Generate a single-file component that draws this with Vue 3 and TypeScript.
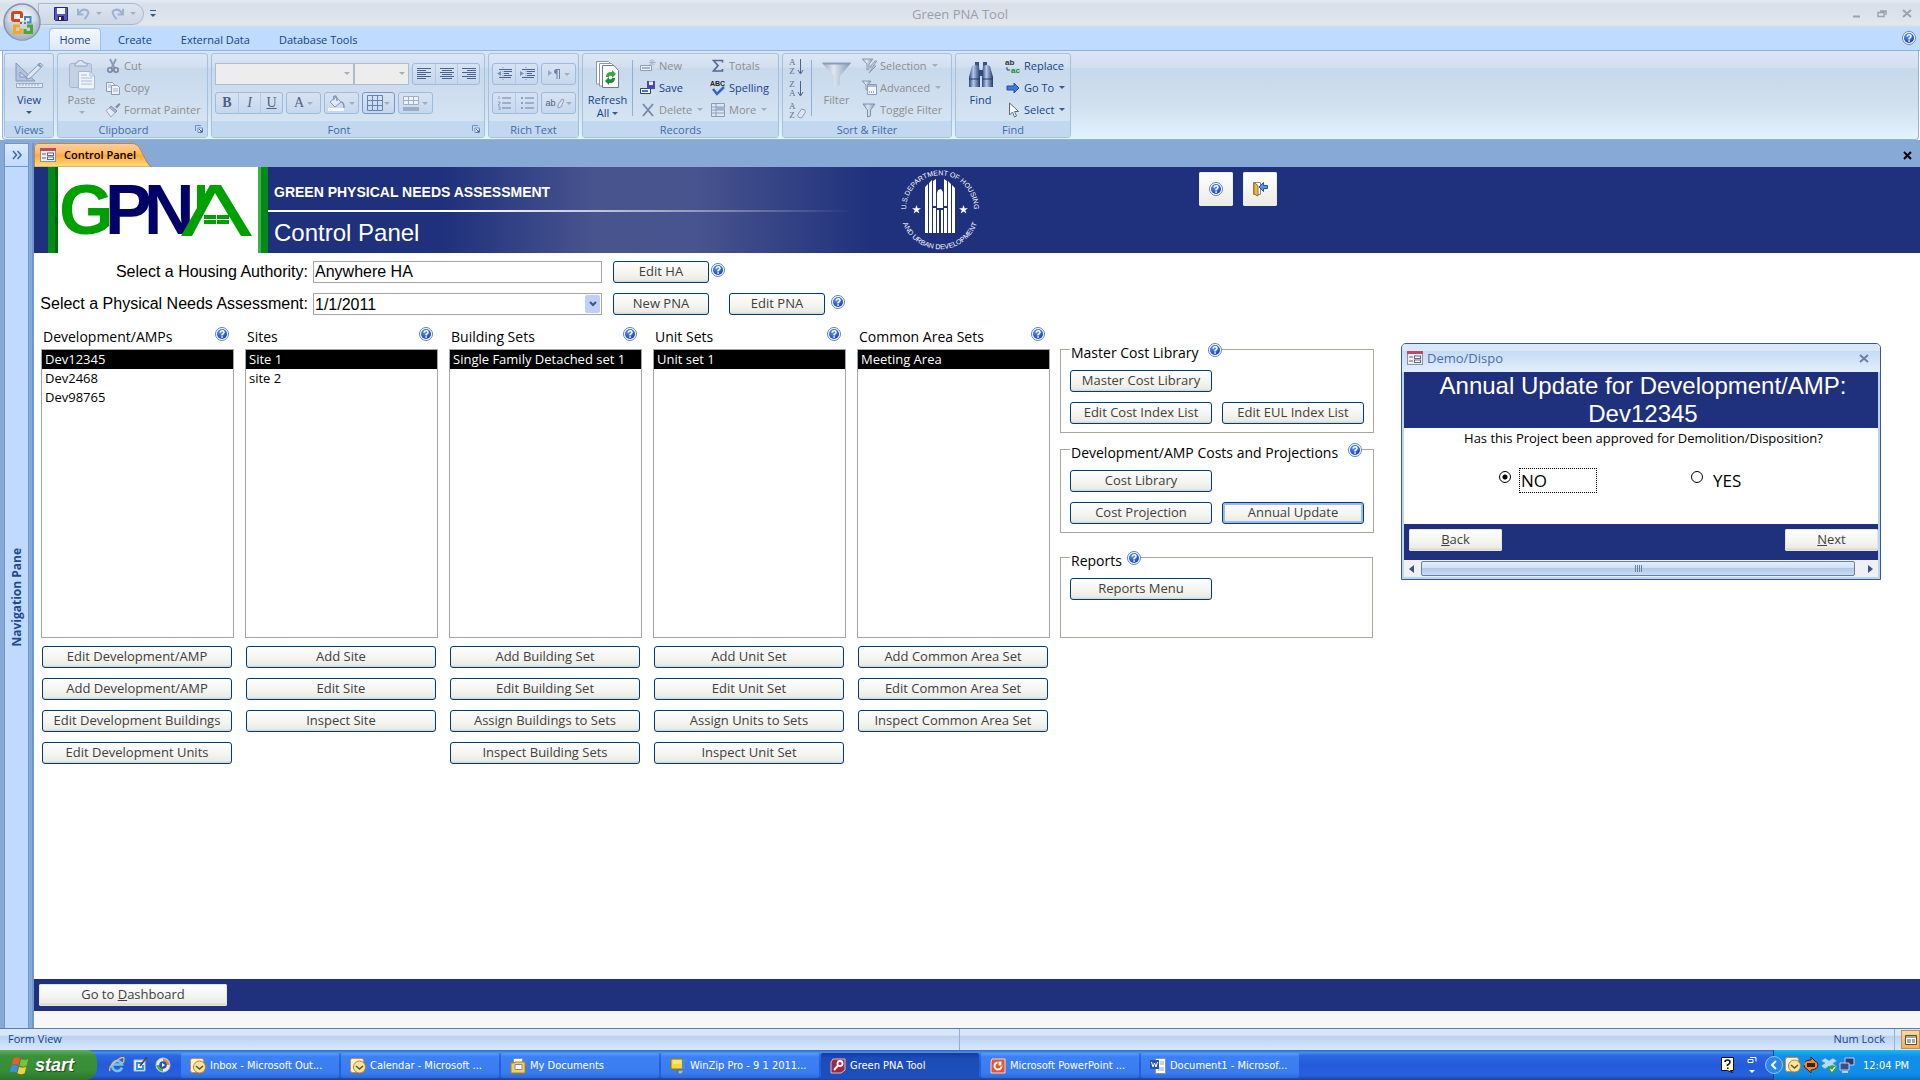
<script setup lang="ts">
import { ref } from 'vue'

interface SmallCommand { icon: string; text: string; off?: boolean; arrow?: boolean }
interface ListColumn { title: string; items: string[]; actions: string[] }
interface CommandButton { text: string; focused?: boolean }
interface CommandGroup { title: string; rows: CommandButton[][] }
interface Task { icon: string; text: string; active?: boolean }

const ribbonTabs = ['Home', 'Create', 'External Data', 'Database Tools']

const clipboard: SmallCommand[] = [
  { icon: 'cut', text: 'Cut', off: true },
  { icon: 'copy', text: 'Copy', off: true },
  { icon: 'brush', text: 'Format Painter', off: true },
]
const records: SmallCommand[] = [
  { icon: 'new', text: 'New', off: true },
  { icon: 'totals', text: 'Totals', off: true },
  { icon: 'saverec', text: 'Save' },
  { icon: 'spell', text: 'Spelling' },
  { icon: 'delete', text: 'Delete', off: true, arrow: true },
  { icon: 'more', text: 'More', off: true, arrow: true },
]
const filters: SmallCommand[] = [
  { icon: 'selection', text: 'Selection', off: true, arrow: true },
  { icon: 'advanced', text: 'Advanced', off: true, arrow: true },
  { icon: 'toggle', text: 'Toggle Filter', off: true },
]
const finds: SmallCommand[] = [
  { icon: 'replace', text: 'Replace' },
  { icon: 'goto', text: 'Go To', arrow: true },
  { icon: 'select', text: 'Select', arrow: true },
]
const sorts = [
  { name: 'Ascending', top: 'A', low: 'Z', eraser: false },
  { name: 'Descending', top: 'Z', low: 'A', eraser: false },
  { name: 'Clear all sorts', top: 'A', low: 'Z', eraser: true },
]

const columns: ListColumn[] = [
  {
    title: 'Development/AMPs',
    items: ['Dev12345', 'Dev2468', 'Dev98765'],
    actions: ['Edit Development/AMP', 'Add Development/AMP', 'Edit Development Buildings', 'Edit Development Units'],
  },
  { title: 'Sites', items: ['Site 1', 'site 2'], actions: ['Add Site', 'Edit Site', 'Inspect Site'] },
  {
    title: 'Building Sets',
    items: ['Single Family Detached set 1'],
    actions: ['Add Building Set', 'Edit Building Set', 'Assign Buildings to Sets', 'Inspect Building Sets'],
  },
  {
    title: 'Unit Sets',
    items: ['Unit set 1'],
    actions: ['Add Unit Set', 'Edit Unit Set', 'Assign Units to Sets', 'Inspect Unit Set'],
  },
  {
    title: 'Common Area Sets',
    items: ['Meeting Area'],
    actions: ['Add Common Area Set', 'Edit Common Area Set', 'Inspect Common Area Set'],
  },
]

const groups: CommandGroup[] = [
  {
    title: 'Master Cost Library',
    rows: [[{ text: 'Master Cost Library' }], [{ text: 'Edit Cost Index List' }, { text: 'Edit EUL Index List' }]],
  },
  {
    title: 'Development/AMP Costs and Projections',
    rows: [[{ text: 'Cost Library' }], [{ text: 'Cost Projection' }, { text: 'Annual Update', focused: true }]],
  },
  { title: 'Reports', rows: [[{ text: 'Reports Menu' }]] },
]

const tasks: Task[] = [
  { icon: 'outlook', text: 'Inbox - Microsoft Out...' },
  { icon: 'outlook', text: 'Calendar - Microsoft ...' },
  { icon: 'docs', text: 'My Documents' },
  { icon: 'zip', text: 'WinZip Pro - 9 1 2011...' },
  { icon: 'access', text: 'Green PNA Tool', active: true },
  { icon: 'ppt', text: 'Microsoft PowerPoint ...' },
  { icon: 'word', text: 'Document1 - Microsof...' },
]

const authority = ref('Anywhere HA')
const assessment = ref('1/1/2011')
const picked = ref(columns.map((c) => c.items[0]))
const approved = ref('NO')
</script>

<template>
  <div class="page">
    <svg class="sprite" aria-hidden="true">
      <defs>
        <radialGradient id="gHelp" cx=".4" cy=".3" r=".8"><stop offset="0" stop-color="#5b9bf5" /><stop offset="1" stop-color="#0c35b8" /></radialGradient>
        <linearGradient id="gMetal" x1="0" y1="0" x2="1" y2="0"><stop offset="0" stop-color="#2c477c" /><stop offset=".4" stop-color="#b5c8e8" /><stop offset="1" stop-color="#22396c" /></linearGradient>
        <linearGradient id="gFunnel" x1="0" y1="0" x2="1" y2="0"><stop offset="0" stop-color="#98a9c4" /><stop offset=".4" stop-color="#dfe6f1" /><stop offset="1" stop-color="#8597b4" /></linearGradient>
        <radialGradient id="gOrb" cx=".5" cy=".4" r=".6"><stop offset="0" stop-color="#ffffff" /><stop offset=".6" stop-color="#d5dce8" /><stop offset="1" stop-color="#8e9db5" /></radialGradient>
        <linearGradient id="gTab" x1="0" y1="0" x2="0" y2="1"><stop offset="0" stop-color="#fdd09b" /><stop offset=".4" stop-color="#fdba69" /><stop offset=".5" stop-color="#ffa83c" /><stop offset="1" stop-color="#ffdf80" /></linearGradient>
      </defs>
      <symbol id="help" viewBox="0 0 14 14">
        <circle cx="7" cy="7" r="6.5" fill="#fff" stroke="#5f82bd" /><circle cx="7" cy="7" r="5" fill="url(#gHelp)" />
        <path d="M5 5.6Q5.2 3.7 7.1 3.7T9 5.4Q9 6.4 7.1 7.4V8.4" fill="none" stroke="#fff" stroke-width="1.5" /><rect x="6.3" y="9.3" width="1.6" height="1.5" fill="#fff" />
      </symbol>
      <symbol id="form" viewBox="0 0 16 14">
        <rect x=".5" y=".5" width="15" height="13" fill="#f4ecea" stroke="#8393ad" /><rect x="0" y="0" width="16" height="3" fill="#b54c68" />
        <path d="M2 6h4M2 10h4" stroke="#5a6b85" /><rect x="7.5" y="5" width="6" height="2.5" fill="#fff" stroke="#5a6b85" /><rect x="7.5" y="9" width="6" height="2.5" fill="#fff" stroke="#5a6b85" />
      </symbol>
      <symbol id="floppy" viewBox="0 0 14 14"><path d="M.5.5h13v13h-12l-1-1z" fill="#5a56c8" stroke="#2b2578" /><path d="M3 1h8v6H3z" fill="#f3f6fc" /><path d="M4 9h6v5H4z" fill="#24204f" /><path d="M5 10h2v3H5z" fill="#fff" /></symbol>
      <symbol id="undo" viewBox="0 0 14 14"><path d="M1 2v6h6M2 7Q5 2 9 3t3 4-4 6" fill="none" stroke="#9db1d3" stroke-width="2.2" /></symbol>
      <symbol id="redo" viewBox="0 0 14 14"><path d="M13 2v6H7M12 7Q9 2 5 3T2 7t4 6" fill="none" stroke="#9db1d3" stroke-width="2.2" /></symbol>
      <symbol id="office" viewBox="0 0 40 40">
        <circle cx="20" cy="20" r="18" fill="url(#gOrb)" stroke="#8593ad" stroke-width="1.5" />
        <path d="M3 21a17 17 0 0 0 34 0Q20 17 3 21z" fill="#b4c0d2" opacity=".5" />
        <path d="M18 18.500h-6q-1.500 0-1.500-1.500v-5q0-1.500 1.500-1.500h6q1.500 0 1.500 1.500v4" fill="none" stroke="#dc4413" stroke-width="3" />
        <path d="M23 18.500v-3.500h5.500v5.500H25" fill="none" stroke="#3c86d6" stroke-width="2" />
        <path d="M18 24h-5.500v6.500h6.500v-4" fill="none" stroke="#f5a91b" stroke-width="3" />
        <path d="M23 27v3.500h6.500V24H25" fill="none" stroke="#4ea62c" stroke-width="3" />
        <path d="M18 20h2v2h-2z" fill="#dc4413" /><path d="M22 20h2v2h-2z" fill="#3c86d6" />
      </symbol>
      <symbol id="view" viewBox="0 0 30 30">
        <path d="M2 3v18h19zM6 12v5h6z" fill="#b4c4de" fill-rule="evenodd" stroke="#8498ba" /><path d="M12 19l1.500-4L26 3l3 2.500L16.500 18z" fill="#dde5f1" stroke="#8498ba" />
        <path d="M24 4l3 3" stroke="#8498ba" stroke-width="2" /><path d="M2.500 23.500h26v4h-26z" fill="#e4eaf4" stroke="#97a8c5" /><path d="M6 24v2M9 24v2M12 24v2M15 24v2M18 24v2M21 24v2M24 24v2" stroke="#97a8c5" />
      </symbol>
      <symbol id="paste" viewBox="0 0 28 30">
        <rect x="1.500" y="3.500" width="22" height="24" rx="2" fill="#c5d2e6" stroke="#a6b6d2" /><path d="M7 6h12V3h-3q0-2.500-3.500-2.500T9 3H7z" fill="#dde5f0" stroke="#91a3c2" />
        <path d="M10.500 11.500H22l4.500 4.500v13h-16z" fill="#f0f4fa" stroke="#a6b6d2" /><path d="M22 11.500V16h4.500M13 15h6M13 18h11M13 21h11M13 24h11" fill="none" stroke="#a9bad7" />
      </symbol>
      <symbol id="cut" viewBox="0 0 16 16"><path d="M5 1l4.500 9M11 1L6.500 10" stroke="#8b9ab5" stroke-width="1.800" /><circle cx="5" cy="12" r="2.200" fill="none" stroke="#75859f" stroke-width="1.600" /><circle cx="11" cy="12" r="2.200" fill="none" stroke="#75859f" stroke-width="1.600" /></symbol>
      <symbol id="copy" viewBox="0 0 16 16"><path d="M1.500 2.500h6l2 2v7h-8z" fill="#eef2f8" stroke="#8b9ab5" /><path d="M6.500 5.500h6l2 2v7h-8z" fill="#eef2f8" stroke="#8b9ab5" /><path d="M3 5h3M3 7h3M8 9h5M8 11h5" stroke="#a3b2cb" /></symbol>
      <symbol id="brush" viewBox="0 0 16 16"><path d="M10 5l4-4 1.500 1.500-3.500 4z" fill="#7d8ea9" /><path d="M6 4l6 5-2 2-6-5z" fill="#a5b3c9" stroke="#8392ac" /><path d="M4.500 6L1 8.500 6 15l4-4.500z" fill="#e8edf5" stroke="#99a8c1" /></symbol>
      <symbol id="launch" viewBox="0 0 8 8"><path d="M.5 6V.5H6" fill="none" stroke="#6c8fc0" /><path d="M3 3h4.500v4.500H3z" fill="#fff" stroke="#6c8fc0" /><path d="M4 4l3 3M7 4.500V7H4.500" stroke="#3f5f95" fill="none" /></symbol>
      <symbol id="alignl" viewBox="0 0 14 12"><path d="M0 .5h14M0 2.500h9M0 4.500h14M0 6.500h9M0 8.500h14M0 10.500h9" stroke="#4b628c" /></symbol>
      <symbol id="alignc" viewBox="0 0 14 12"><path d="M0 .5h14M2 2.500h10M0 4.500h14M2 6.500h10M0 8.500h14M2 10.500h10" stroke="#4b628c" /></symbol>
      <symbol id="alignr" viewBox="0 0 14 12"><path d="M0 .5h14M5 2.500h9M0 4.500h14M5 6.500h9M0 8.500h14M5 10.500h9" stroke="#4b628c" /></symbol>
      <symbol id="outdent" viewBox="0 0 16 16"><path d="M7 1v14" stroke="#7f92b3" stroke-dasharray="1 1" /><path d="M3 3.500h13M8 5.500h8M8 7.500h5M8 9.500h8M3 11.500h12" stroke="#4b628c" /><path d="M5 5L1 7.500 5 10z" fill="#7f92b3" /></symbol>
      <symbol id="indent" viewBox="0 0 16 16"><path d="M7 1v14" stroke="#7f92b3" stroke-dasharray="1 1" /><path d="M3 3.500h13M8 5.500h8M8 7.500h5M8 9.500h8M3 11.500h12" stroke="#4b628c" /><path d="M1 5l4 2.500L1 10z" fill="#7f92b3" /></symbol>
      <symbol id="para" viewBox="0 0 14 12"><path d="M1 2l4 3-4 3z" fill="#98a8c4" /><path d="M10 11V1M12.500 11V1M13 1.500H9.500" fill="none" stroke="#6d80a3" /><path d="M10 1q-3 0-3 2.500T10 6z" fill="#6d80a3" /></symbol>
      <symbol id="numlist" viewBox="0 0 14 14"><path d="M2 0v3M1 6h2v1L1 9h2M1 11h2v3H1" fill="none" stroke="#8e9fbd" /><path d="M5 2h9M5 7h9M5 12h9" stroke="#6d80a3" /></symbol>
      <symbol id="bullist" viewBox="0 0 14 14"><path d="M1 1h2v2H1zM1 6h2v2H1zM1 11h2v2H1z" fill="#8e9fbd" /><path d="M5 2h9M5 7h9M5 12h9" stroke="#6d80a3" /></symbol>
      <symbol id="marker" viewBox="0 0 8 12"><path d="M1 8l4-6 2 1-3 7-3 1z" fill="#dbe2ee" stroke="#8e9fbd" /></symbol>
      <symbol id="bucket" viewBox="0 0 18 16"><path d="M2 7l6-5 5 5-6 5z" fill="#e4eaf3" stroke="#8797b3" /><path d="M6 5q-1-4 1-4t2 5M13 7q3 0 3 6" fill="none" stroke="#8797b3" stroke-width="1.500" /><path d="M0 13h16v3H0z" fill="#f4f6fa" /></symbol>
      <symbol id="grid" viewBox="0 0 16 16"><path d="M.5.5h15v15H.5zM5.500 0v16M10.500 0v16M0 5.500h16M0 10.500h16" fill="none" stroke="#6482b2" /></symbol>
      <symbol id="altrow" viewBox="0 0 16 16"><path d="M.5 1.500h15v8H.5zM5.500 1v8M10.500 1v8M0 5.500h16" fill="#eef2f8" stroke="#a0afc8" /><path d="M0 12h16v4H0z" fill="#9cabc7" /></symbol>
      <symbol id="refresh" viewBox="0 0 26 30">
        <path d="M1.500 1.500h12l3 3V24h-15z" fill="#fff" stroke="#8b95a5" /><path d="M4.500 3.500h12l3 3V26h-15z" fill="#fff" stroke="#8b95a5" /><path d="M7.500 5.500H19l4.500 5v17h-16z" fill="#fff" stroke="#6f7a8c" />
        <path d="M11 17q0-5 5-5h1v-2l4 4-4 4v-2q-3-1-3 1z" fill="#35a548" /><path d="M20 18q0 5-5 5h-1v2l-4-4 4-4v2q3 1 3-1z" fill="#1d8c36" />
      </symbol>
      <symbol id="new" viewBox="0 0 16 16"><path d="M.5 7.500h11v5H.5z" fill="#eef2f8" stroke="#8b9ab5" /><path d="M2 10h8" stroke="#8b9ab5" stroke-width="1.500" /><path d="M12 1v7M9 4.500h7M9.500 2l5 5M14.500 2l-5 5" stroke="#a9b6cc" /></symbol>
      <symbol id="totals" viewBox="0 0 16 16"><path d="M12.500 4.500V2.500h-9l4.500 5-4.500 5.500h9V11" fill="none" stroke="#53688f" stroke-width="1.600" /></symbol>
      <symbol id="saverec" viewBox="0 0 16 16"><path d="M.5 8.500h10v5H.5z" fill="#fff" stroke="#29436f" /><path d="M2 11h6" stroke="#3e78d8" stroke-width="2" /><path d="M7 1h8v8H7z" fill="#4b47b5" /><path d="M9 1.500h4V5H9z" fill="#e9eefb" /></symbol>
      <symbol id="delete" viewBox="0 0 16 16"><path d="M3 2l10 12M13 2L3 14" stroke="#7586a4" stroke-width="1.800" /></symbol>
      <symbol id="more" viewBox="0 0 16 16"><path d="M1.500 1.500h13v13h-13zM1 5h14M1 8h14M1 11h14M6 1v14" fill="#dde5f1" stroke="#8b9dbd" /><path d="M6 5h9v3H6z" fill="#9cb0d2" /></symbol>
      <symbol id="down" viewBox="0 0 7 18"><path d="M3.500 1v14M1 12l2.500 4L6 12" fill="none" stroke="#4b628c" /></symbol>
      <symbol id="eraser" viewBox="0 0 9 18"><path d="M0.500 13l4-6q4 0 4 3l-4 6q-4 0-4-3z" fill="#dfe6f1" stroke="#8b9ab5" /></symbol>
      <symbol id="funnel" viewBox="0 0 32 28"><path d="M1 2h29L19 15v9l-6 3V15z" fill="url(#gFunnel)" /><path d="M1 1.500h29l-2 2H3z" fill="#8b9cba" /></symbol>
      <symbol id="selection" viewBox="0 0 16 16"><path d="M1 1h11L8 6v5l-2 1V6z" fill="url(#gFunnel)" stroke="#8b9ab5" /><path d="M14 3l-5 6h3l-4 6 7-7h-3l4-5z" fill="#c8d2e3" stroke="#8b9ab5" /></symbol>
      <symbol id="advanced" viewBox="0 0 16 16"><path d="M1 1h9L7 5v4L5 10V5z" fill="url(#gFunnel)" stroke="#8b9ab5" /><path d="M6.500 4.500h9v10h-9z" fill="#f2f5fa" stroke="#8b9ab5" /><path d="M8 12h1M10 12h1M12 12h1" stroke="#4b628c" /><path d="M7 6h8" stroke="#a9bad7" stroke-width="2" /></symbol>
      <symbol id="toggle" viewBox="0 0 16 16"><path d="M2 2h12L9.500 8v6l-3 1V8z" fill="url(#gFunnel)" stroke="#7f8fae" /></symbol>
      <symbol id="find" viewBox="0 0 28 28">
        <path d="M8 1h4v4H8zM16 1h4v4h-4z" fill="#36528b" /><path d="M5 5q3-2 7 0l1 11v10H2V16z" fill="url(#gMetal)" /><path d="M16 5q4-2 7 0l3 11v10H15V16z" fill="url(#gMetal)" /><path d="M12 9h4v6h-4z" fill="#2f4a80" /><path d="M2 18h11M15 18h11" stroke="#22396c" />
      </symbol>
      <symbol id="goto" viewBox="0 0 16 16"><path d="M2 6h7V3l5 5-5 5v-3H2z" fill="#3e7be0" stroke="#1f4ca8" /></symbol>
      <symbol id="select" viewBox="0 0 16 16"><path d="M4.500 1v12l3-3 2 5 2-1-2-4.500h4z" fill="#fff" stroke="#5a6a86" /></symbol>
      <symbol id="exit" viewBox="0 0 16 16"><path d="M1.500 1.500h7v12h-7z" fill="#fff" stroke="#8c8c8c" /><path d="M2 1.500l4 3V15l-4-2z" fill="#f2b83f" stroke="#96701c" /><path d="M15.500 4.500h-4v-3L7 6l4.500 4.500v-3h4z" fill="#5b93ea" stroke="#2453b4" /></symbol>
      <symbol id="outlook" viewBox="0 0 16 16"><rect x=".5" y=".5" width="13" height="14" rx="2" fill="#fff5df" stroke="#d98a1e" /><circle cx="9.500" cy="9" r="6" fill="#fbe4a2" stroke="#b98224" /><path d="M6 8l3.500 3L13 8" fill="none" stroke="#6f5118" stroke-width="1.500" /></symbol>
      <symbol id="docs" viewBox="0 0 16 16"><path d="M3.500.5h9v9h-9z" fill="#fff" stroke="#8a94a6" /><path d="M1 5h3l1-1h10v11H1z" fill="#f6cf57" stroke="#b0821a" /><path d="M5 6.500h7v5H5z" fill="#fff" stroke="#7b8aa0" /></symbol>
      <symbol id="zip" viewBox="0 0 16 16"><path d="M1 1h13v10H1z" fill="#f9d632" stroke="#95740b" /><path d="M3 3h8M3 5h8" stroke="#fff6b4" /><path d="M12 1h3v12h-3z" fill="#4b89d9" /><path d="M8 12h6l-2 4H8z" fill="#9fb8d6" stroke="#4b6c9c" /></symbol>
      <symbol id="access" viewBox="0 0 16 16"><path d="M3 1h12v11l-4 3H1V4z" fill="#a12843" stroke="#e3b8c1" /><circle cx="10" cy="5.500" r="2.500" fill="none" stroke="#fff" stroke-width="1.800" /><path d="M8 7.500L4 12" stroke="#fff" stroke-width="2" /></symbol>
      <symbol id="ppt" viewBox="0 0 16 16"><path d="M2 1h13v14H1V4z" fill="#e8532a" stroke="#fbd5c8" /><circle cx="8" cy="8" r="3.500" fill="none" stroke="#fff" stroke-width="2" /><path d="M8 8V3h4v5z" fill="#fff" stroke="#e8532a" /></symbol>
      <symbol id="word" viewBox="0 0 16 16"><path d="M5.500.5h10v15h-10z" fill="#fff" stroke="#7b92bd" /><path d="M10 4h4M10 6h4M8 12h6M8 10h6" stroke="#90a6cf" /><path d="M0 2h9v9H0z" fill="#2b559f" /><path d="M1.500 4l1.500 5 1.500-4L6 9l1.500-5" fill="none" stroke="#fff" /></symbol>
      <symbol id="ie" viewBox="0 0 16 16"><path d="M13 10.500A5 5 0 1 1 13 7.500H4" fill="none" stroke="#6fc3f8" stroke-width="2.600" /><path d="M1 14Q-1 10 7 4t8-2-2 4" fill="none" stroke="#f4c542" stroke-width="1.300" /></symbol>
      <symbol id="desk" viewBox="0 0 16 16"><path d="M2 3h11v11H2z" fill="#eef4ff" stroke="#9fc0ee" /><path d="M11 6H5v6h6V8" fill="none" stroke="#2d8bd8" stroke-width="1.800" /><path d="M15 0L8 9" stroke="#5b452c" stroke-width="1.800" /></symbol>
      <symbol id="wmp" viewBox="0 0 16 16"><circle cx="8" cy="8" r="7" fill="#e7edf8" stroke="#b9cdf0" /><path d="M8 1.500A6.500 6.500 0 0 1 14.500 8H11L8 5z" fill="#f08a24" /><path d="M8 14.500A6.500 6.500 0 0 1 1.500 8H5l3 3z" fill="#58ad3c" /><circle cx="8" cy="8" r="3.800" fill="#2455b5" /><path d="M7 6l3 2-3 2z" fill="#fff" /></symbol>
      <symbol id="flag" viewBox="0 0 20 18"><path d="M4 3q3-2 6 0L8.500 9q-3-2-6 0z" fill="#ee5a2c" /><path d="M11 3.500q3 2 6.500 0L16 9.500q-3 2-6.500 0z" fill="#7cc142" /><path d="M2.200 10q3-2 6 0L6.800 16q-3-2-6 0z" fill="#3f8cf0" /><path d="M9.200 10.500q3 2 6.500 0l-1.500 6q-3 2-6.500 0z" fill="#fbcf37" /></symbol>
      <symbol id="agent" viewBox="0 0 16 16"><path d="M2 5q1-2 6-2V0l4 4q3 1 3 4t-3 4-4 1v3l-4-4q-3-1-3-4" fill="#f08430" stroke="#3a2410" /><path d="M4 6h8v4H4z" fill="#3a2410" /></symbol>
      <symbol id="dropbox" viewBox="0 0 16 16"><path d="M4 1l4 2.500L12 1l4 3-4 2.500 4 3-4 2.500-4-3-4 3-4-3 4-3L0 4z" fill="#b4dcfa" stroke="#3e86cb" stroke-width=".6" /><circle cx="11.500" cy="12" r="3.800" fill="#36a23a" /><path d="M9.500 12l1.500 2 3-4" fill="none" stroke="#fff" stroke-width="1.200" /></symbol>
      <symbol id="net" viewBox="0 0 16 16"><path d="M6 1h9v7H6z" fill="#2b3b72" stroke="#c5cde6" /><path d="M1 6h9v7H1z" fill="#3c4c8d" stroke="#c5cde6" /><path d="M3 15h6" stroke="#c5cde6" stroke-width="2" /></symbol>
      <symbol id="ask" viewBox="0 0 14 16"><path d="M.5.5h12v13h-3l2 2-5-2h-6z" fill="#fffbe0" stroke="#111" /><path d="M4 5q0-2 2.500-2T9 5t-2.500 3v1" fill="none" stroke="#111" stroke-width="1.600" /><path d="M6 10.500h1.600V12H6z" fill="#111" /></symbol>
      <symbol id="star" viewBox="0 0 10 10"><path d="M5 0l1.200 3.600H10L7 5.900 8.100 9.500 5 7.300 1.900 9.500 3 5.900 0 3.600h3.800z" fill="#fff" /></symbol>
    </svg>

    <header class="titlebar">
      <div class="bar-left">
        <div class="qat">
          <button class="plain" type="button" aria-label="Save"><svg width="14" height="14"><use href="#floppy" /></svg></button>
          <button class="plain drop" type="button" aria-label="Undo"><svg width="13" height="13"><use href="#undo" /></svg><i class="tri off"></i></button>
          <button class="plain drop" type="button" aria-label="Redo"><svg width="13" height="13"><use href="#redo" /></svg><i class="tri off"></i></button>
        </div>
        <button class="plain custom" type="button" aria-label="Customize toolbar"><i class="tri"></i></button>
      </div>
      <h1 class="app-title">Green PNA Tool</h1>
      <div class="winbtns">
        <button class="plain" type="button" aria-label="Minimize"><svg width="10" height="10"><path d="M1 7.500h7" stroke="#9aa3ae" stroke-width="2" /></svg></button>
        <button class="plain" type="button" aria-label="Restore"><svg width="10" height="10"><path d="M3 2h6v4M1 3.500h6v4H1z" fill="none" stroke="#9aa3ae" stroke-width="1.500" /></svg></button>
        <button class="plain" type="button" aria-label="Close"><svg width="10" height="10"><path d="M1 1l8 7M9 1L1 8" stroke="#9aa3ae" stroke-width="2" /></svg></button>
      </div>
    </header>
    <button class="plain orb" type="button" aria-label="Office"><svg width="40" height="40"><use href="#office" /></svg></button>

    <nav class="tabs">
      <button v-for="(t, i) in ribbonTabs" :key="t" class="tab" :class="{ on: i === 0 }" type="button">{{ t }}</button>
      <button class="plain tabs-help" type="button" aria-label="Help"><svg width="14" height="14"><use href="#help" /></svg></button>
    </nav>

    <section class="ribbon">
      <div class="group g-views">
        <div class="group-body">
          <button class="big" type="button"><svg width="30" height="30"><use href="#view" /></svg><span>View</span><i class="tri"></i></button>
        </div>
        <div class="group-name">Views</div>
      </div>

      <div class="group g-clip">
        <div class="group-body">
          <button class="big off" type="button"><svg width="28" height="30"><use href="#paste" /></svg><span>Paste</span><i class="tri off"></i></button>
          <div class="stack">
            <button v-for="c in clipboard" :key="c.text" class="cmd off" type="button"><svg width="16" height="16"><use :href="'#' + c.icon" /></svg>{{ c.text }}</button>
          </div>
        </div>
        <div class="group-name launcher">Clipboard<svg class="launch" width="8" height="8"><use href="#launch" /></svg></div>
      </div>

      <div class="group g-font">
        <div class="group-body tools">
          <div class="tool-row">
            <span class="pair">
              <span class="fbox f-name"><select aria-label="Font" disabled></select><i class="tri off"></i></span>
              <span class="fbox f-size"><select aria-label="Font size" disabled></select><i class="tri off"></i></span>
            </span>
            <span class="seg">
              <button v-for="a in ['alignl', 'alignc', 'alignr']" :key="a" class="t23" type="button" :aria-label="a"><svg width="14" height="12"><use :href="'#' + a" /></svg></button>
            </span>
          </div>
          <div class="tool-row">
            <span class="seg letters">
              <button class="t23" type="button"><b>B</b></button><button class="t23" type="button"><em>I</em></button><button class="t23" type="button"><u>U</u></button>
            </span>
            <span class="seg"><button class="t35 letter-a" type="button">A<i class="tri off"></i></button></span>
            <span class="seg"><button class="t35" type="button" aria-label="Fill color"><svg width="18" height="16"><use href="#bucket" /></svg><i class="tri off"></i></button></span>
            <span class="seg dark"><button class="t32" type="button" aria-label="Gridlines"><svg width="16" height="16"><use href="#grid" /></svg><i class="tri off"></i></button></span>
            <span class="seg"><button class="t35" type="button" aria-label="Alternate row color"><svg width="16" height="16"><use href="#altrow" /></svg><i class="tri off"></i></button></span>
          </div>
        </div>
        <div class="group-name launcher">Font<svg class="launch" width="8" height="8"><use href="#launch" /></svg></div>
      </div>

      <div class="group g-rich">
        <div class="group-body tools">
          <div class="tool-row">
            <span class="seg"><button class="t23" type="button" aria-label="Decrease indent"><svg width="16" height="16"><use href="#outdent" /></svg></button><button class="t23" type="button" aria-label="Increase indent"><svg width="16" height="16"><use href="#indent" /></svg></button></span>
            <span class="seg"><button class="t35" type="button" aria-label="Direction"><svg width="14" height="12"><use href="#para" /></svg><i class="tri off"></i></button></span>
          </div>
          <div class="tool-row">
            <span class="seg"><button class="t23" type="button" aria-label="Numbering"><svg width="14" height="14"><use href="#numlist" /></svg></button><button class="t23" type="button" aria-label="Bullets"><svg width="14" height="14"><use href="#bullist" /></svg></button></span>
            <span class="seg"><button class="t35 hilite" type="button" aria-label="Highlight"><span>ab</span><svg width="8" height="12"><use href="#marker" /></svg><i class="tri off"></i></button></span>
          </div>
        </div>
        <div class="group-name">Rich Text</div>
      </div>

      <div class="group g-rec">
        <div class="group-body">
          <button class="big" type="button"><svg width="26" height="30"><use href="#refresh" /></svg><span>Refresh</span><span class="second">All<i class="tri"></i></span></button>
          <div class="rule"></div>
          <div class="stack two">
            <button v-for="c in records" :key="c.text" class="cmd" :class="{ off: c.off }" type="button">
              <svg v-if="c.icon === 'spell'" width="16" height="16" viewBox="0 0 16 16"><text x="0" y="6" font-size="7" font-weight="700" font-family="Liberation Sans, sans-serif" fill="#222">ABC</text><path d="M3 9l4 5 7-7" fill="none" stroke="#2f63cf" stroke-width="2.500" /></svg>
              <svg v-else width="16" height="16"><use :href="'#' + c.icon" /></svg>{{ c.text }}<i v-if="c.arrow" class="tri off"></i>
            </button>
          </div>
        </div>
        <div class="group-name">Records</div>
      </div>

      <div class="group g-sort">
        <div class="group-body">
          <div class="stack sorts">
            <button v-for="s in sorts" :key="s.name" class="cmd" type="button" :aria-label="s.name">
              <span class="pile"><span>{{ s.top }}</span><span>{{ s.low }}</span></span>
              <svg v-if="s.eraser" width="9" height="18"><use href="#eraser" /></svg>
              <svg v-else width="7" height="18"><use href="#down" /></svg>
            </button>
          </div>
          <div class="rule"></div>
          <button class="big off" type="button"><svg width="32" height="30"><use href="#funnel" /></svg><span>Filter</span></button>
          <div class="stack">
            <button v-for="c in filters" :key="c.text" class="cmd off" type="button"><svg width="16" height="16"><use :href="'#' + c.icon" /></svg>{{ c.text }}<i v-if="c.arrow" class="tri off"></i></button>
          </div>
        </div>
        <div class="group-name">Sort &amp; Filter</div>
      </div>

      <div class="group g-find">
        <div class="group-body">
          <button class="big" type="button"><svg width="28" height="30"><use href="#find" /></svg><span>Find</span></button>
          <div class="stack">
            <button v-for="c in finds" :key="c.text" class="cmd" type="button">
              <svg v-if="c.icon === 'replace'" width="16" height="16" viewBox="0 0 16 16"><g font-size="8" font-weight="700" font-family="Liberation Sans, sans-serif"><text x="0" y="7" fill="#333">ab</text><text x="6" y="15" fill="#14891f">ac</text></g><path d="M2 9v3h3" fill="none" stroke="#29436f" /></svg>
              <svg v-else width="16" height="16"><use :href="'#' + c.icon" /></svg>{{ c.text }}<i v-if="c.arrow" class="tri"></i>
            </button>
          </div>
        </div>
        <div class="group-name">Find</div>
      </div>
    </section>

    <div class="work">
      <aside class="navpane">
        <button class="plain expand" type="button" aria-label="Expand navigation pane"><svg width="10" height="10"><path d="M1 1l3.500 4L1 9M5.500 1L9 5 5.500 9" fill="none" stroke="#3a68ae" stroke-width="1.500" /></svg></button>
        <div class="nav-body"><span>Navigation Pane</span></div>
      </aside>

      <main class="doc">
        <div class="doctabs">
          <button class="doctab" type="button">
            <svg class="shape" viewBox="0 0 118 24"><path d="M.5 24V4Q.5.500 4 .5h94q6 0 9 7l5 10q3 6 6 6.500z" fill="url(#gTab)" stroke="#b98a4a" /></svg>
            <svg class="ico" width="16" height="14"><use href="#form" /></svg><span>Control Panel</span>
          </button>
          <button class="plain doc-close" type="button" aria-label="Close form"><svg width="9" height="9"><path d="M1 1l7 7M8 1L1 8" stroke="#000" stroke-width="2" /></svg></button>
        </div>

        <div class="banner">
          <svg class="logo" width="220" height="86" viewBox="0 0 220 86" role="img" aria-label="GPNA">
            <rect width="220" height="86" fill="#fff" /><rect width="10" height="86" fill="#008c14" /><rect x="7" width="3" height="86" fill="#00690d" /><rect x="210" width="10" height="86" fill="#008c14" /><rect x="210" width="3" height="86" fill="#3fae4c" />
            <g font-family="Liberation Sans, Arial, sans-serif" font-weight="700" font-size="70"><text x="11" y="67" fill="#00a000">G</text><text x="57" y="67" fill="#000066">P</text><text x="96" y="67" fill="#000066">N</text></g>
            <path d="M133 69L162 18h11l31 51h-11L167 26l-23 43z" fill="#00a000" /><path d="M149 18h8v12l-8 14z" fill="#00a000" /><path d="M156 48h12v4h-12zM169 48h12v4h-12zM156 53h12v4h-12zM169 53h12v4h-12z" fill="#00a000" />
          </svg>
          <div class="banner-text">
            <p class="product">GREEN PHYSICAL NEEDS ASSESSMENT</p>
            <h2>Control Panel</h2>
          </div>
          <svg class="seal" width="84" height="84" viewBox="0 0 84 84" role="img" aria-label="Department seal">
            <defs><path id="arcTop" d="M8.500 48A34 34 0 1 1 75.500 48" /><path id="arcLow" d="M3 49A39.500 39.500 0 0 0 81 49" /></defs>
            <g font-family="Liberation Sans, Arial, sans-serif" font-size="7" fill="#fff" text-anchor="middle">
              <text><textPath href="#arcTop" startOffset="50%">U.S.DEPARTMENT OF HOUSING</textPath></text>
              <text><textPath href="#arcLow" startOffset="50%">AND URBAN DEVELOPMENT</textPath></text>
            </g>
            <path d="M27 20l3-3v49h-3zM31 16l3-3v53h-3zM35 14l3-2v27h-3zM35 41h3v25h-3zM39 26l1-3 3-1 2 3v16h-6zM39 43h2v23h-2zM43 43h2v23h-2zM46 12l3 2v25h-3zM46 41h3v25h-3zM50 14l3 3v49h-3zM54 18l3 3v45h-3z" fill="#fff" />
            <svg x="14" y="38" width="9" height="9"><use href="#star" /></svg><svg x="61" y="38" width="9" height="9"><use href="#star" /></svg>
          </svg>
          <div class="banner-btns">
            <button class="square" type="button" aria-label="Help"><svg width="14" height="14"><use href="#help" /></svg></button>
            <button class="square" type="button" aria-label="Exit"><svg width="16" height="16"><use href="#exit" /></svg></button>
          </div>
        </div>

        <div class="body">
          <div class="field-row">
            <label for="ha">Select a Housing Authority:</label>
            <input id="ha" v-model="authority" class="field" type="text" />
            <button class="btn w96" type="button">Edit HA</button>
            <button class="plain help near" type="button" aria-label="Help on housing authority"><svg width="14" height="14"><use href="#help" /></svg></button>
          </div>
          <div class="field-row">
            <label for="pna">Select a Physical Needs Assessment:</label>
            <span class="combo">
              <select id="pna" v-model="assessment" class="field"><option>1/1/2011</option></select>
              <span class="combo-arrow"><svg width="8" height="6"><path d="M1 1l3 3 3-3" fill="none" stroke="#3c5583" stroke-width="2" /></svg></span>
            </span>
            <button class="btn w96" type="button">New PNA</button>
            <button class="btn w96 second-btn" type="button">Edit PNA</button>
            <button class="plain help" type="button" aria-label="Help on assessment"><svg width="14" height="14"><use href="#help" /></svg></button>
          </div>

          <div class="workspace">
            <section v-for="(c, i) in columns" :key="c.title" class="col">
              <div class="col-head">
                <label :for="'list' + i">{{ c.title }}</label>
                <button class="plain" type="button" :aria-label="'Help on ' + c.title"><svg width="14" height="14"><use href="#help" /></svg></button>
              </div>
              <select :id="'list' + i" v-model="picked[i]" class="list" size="14">
                <option v-for="o in c.items" :key="o">{{ o }}</option>
              </select>
              <div class="col-actions">
                <button v-for="a in c.actions" :key="a" class="btn" type="button">{{ a }}</button>
              </div>
            </section>

            <div class="groups">
              <fieldset v-for="g in groups" :key="g.title" class="box">
                <legend>{{ g.title }}<button class="plain" type="button" :aria-label="'Help on ' + g.title"><svg width="14" height="14"><use href="#help" /></svg></button></legend>
                <div v-for="(r, i) in g.rows" :key="i" class="box-row">
                  <button v-for="b in r" :key="b.text" class="btn w142" :class="{ focused: b.focused }" type="button">{{ b.text }}</button>
                </div>
              </fieldset>
            </div>
          </div>

          <section class="dialog" role="dialog" aria-label="Demo/Dispo">
            <div class="dlg-title">
              <svg width="16" height="14"><use href="#form" /></svg><span>Demo/Dispo</span>
              <button class="plain" type="button" aria-label="Close dialog"><svg width="10" height="9"><path d="M1 1l8 7M9 1L1 8" stroke="#6b7fa3" stroke-width="2" /></svg></button>
            </div>
            <div class="dlg-body">
              <h3>Annual Update for Development/AMP: Dev12345</h3>
              <p>Has this Project been approved for Demolition/Disposition?</p>
              <div class="choices">
                <label class="choice"><input v-model="approved" type="radio" name="approved" value="NO" /><span class="marked">NO</span></label>
                <label class="choice"><input v-model="approved" type="radio" name="approved" value="YES" /><span>YES</span></label>
              </div>
              <div class="dlg-foot">
                <button class="btn flat" type="button"><span><u>B</u>ack</span></button>
                <button class="btn flat" type="button"><span><u>N</u>ext</span></button>
              </div>
              <div class="scroll">
                <svg width="16" height="16"><path d="M10 4v8L5 8z" fill="#39538a" /></svg>
                <div class="thumb"><i></i></div>
                <svg width="16" height="16"><path d="M6 4v8l5-4z" fill="#39538a" /></svg>
              </div>
            </div>
          </section>
        </div>

        <div class="footer"><button class="btn flat" type="button"><span>Go to <u>D</u>ashboard</span></button></div>
        <div class="under"></div>
      </main>
    </div>

    <div class="status">
      <span class="status-left">Form View</span>
      <span class="status-mid">Num Lock</span>
      <button class="plain formview" type="button" aria-label="Form View"><svg width="12" height="10"><path d="M.5.500h11v9H.5z" fill="#fff" stroke="#4c4c4c" /><path d="M1 2h10M2 5h4M2 7h4M7 5h3M7 7h3" stroke="#4c4c4c" /></svg></button>
    </div>

    <footer class="taskbar">
      <button class="start" type="button"><svg width="22" height="20"><use href="#flag" /></svg><span>start</span></button>
      <div class="quick">
        <button v-for="q in ['ie', 'desk', 'wmp']" :key="q" class="plain" type="button" :aria-label="q"><svg width="16" height="16"><use :href="'#' + q" /></svg></button>
      </div>
      <div class="tasks">
        <button v-for="t in tasks" :key="t.text" class="task" :class="{ active: t.active }" type="button"><svg width="16" height="16"><use :href="'#' + t.icon" /></svg><span>{{ t.text }}</span></button>
      </div>
      <div class="lang">
        <svg width="14" height="16"><use href="#ask" /></svg>
        <svg width="10" height="18"><path d="M3 1.500h6v4M1 3.500h5v3H1z" fill="none" stroke="#fff" /><path d="M2 14h6l-3 3z" fill="#fff" /></svg>
      </div>
      <div class="tray">
        <button class="plain chevron" type="button" aria-label="Show hidden icons"><svg width="18" height="18"><circle cx="9" cy="9" r="8.500" fill="#2b86e8" stroke="#8cc4fb" /><path d="M11 5L7 9l4 4" fill="none" stroke="#fff" stroke-width="2" /></svg></button>
        <svg v-for="t in ['outlook', 'agent', 'dropbox', 'net']" :key="t" width="16" height="16"><use :href="'#' + t" /></svg>
        <span>12:04 PM</span>
      </div>
    </footer>
  </div>
</template>

<style>
html,
body {
  margin: 0;
  background: #fff;
}
</style>

<style scoped>
.page {
  position: relative;
  display: flex;
  flex-direction: column;
  min-height: 100vh;
  font-family: "Open Sans", "Noto Sans", sans-serif;
  font-size: 13px;
  color: #000;
}
.page * {
  box-sizing: border-box;
}
button,
input,
select {
  font: inherit;
  margin: 0;
}
svg {
  flex: none;
  display: block;
}
.sprite {
  position: absolute;
  width: 0;
  height: 0;
}
.plain {
  display: flex;
  align-items: center;
  padding: 0;
  border: 0;
  background: none;
}
.tri {
  flex: none;
  width: 0;
  height: 0;
  border: 3px solid transparent;
  border-top-color: #35588f;
  border-bottom: 0;
}
.tri.off {
  border-top-color: #a7adb8;
}

/* title bar */
.titlebar {
  display: grid;
  grid-template-columns: 1fr auto 1fr;
  align-items: center;
  height: 27px;
  background: linear-gradient(#e3eaf3, #d7dfea 20%, #e2e7ec 90%, #cfdbe6);
}
.bar-left {
  display: flex;
  align-items: center;
  padding-left: 38px;
}
.qat {
  display: flex;
  align-items: center;
  gap: 9px;
  width: 106px;
  height: 22px;
  padding-left: 15px;
  border: 1px solid #a9b9d0;
  border-radius: 0 11px 11px 0;
  background: linear-gradient(#dde5ef, #cdd8e6);
}
.drop {
  gap: 6px;
}
.custom {
  margin-left: 6px;
  padding-top: 3px;
  border-top: 1px solid #35588f;
}
.app-title {
  margin: 0;
  font-size: 13px;
  line-height: 18px;
  font-weight: 400;
  color: #9a9ea6;
}
.winbtns {
  display: flex;
  justify-content: flex-end;
  gap: 15px;
  padding-right: 8px;
}
.orb {
  position: absolute;
  left: 2px;
  top: 2px;
  z-index: 2;
}
.tabs {
  display: flex;
  align-items: flex-end;
  height: 24px;
  padding: 0 4px 0 49px;
  background: #bfdbff;
  border-bottom: 1px solid #8db2e3;
  font-size: 11px;
}
.tab {
  height: 22px;
  padding: 0 14px;
  border: 0;
  background: none;
  color: #15428b;
}
.tab + .tab {
  padding: 0 12px 0 17px;
}
.tab.on {
  width: 52px;
  padding: 0;
  border: 1px solid #9cbfee;
  border-bottom: 0;
  border-radius: 4px 4px 0 0;
  background: linear-gradient(#f5f9ff, #dde8f6);
}
.tabs-help {
  margin-left: auto;
  height: 24px;
}

/* ribbon */
.ribbon {
  display: flex;
  gap: 3px;
  height: 89px;
  margin: 0 1px 0 2px;
  padding: 2px 1px 1px;
  border: 1px solid #8db2e3;
  border-top: 0;
  border-radius: 0 0 4px 4px;
  background: linear-gradient(#dae5f3, #d3dfef 19%, #c7d8ed 20%, #d0dfec 60%, #e2f4fe);
  font-size: 11px;
}
.group {
  flex: none;
  display: flex;
  flex-direction: column;
  border: 1px solid #a3c0de;
  border-radius: 3px;
  background: linear-gradient(#dce7f4, #d2dfef 16%, #c8d9ed 17%, #d9e7f4);
}
.group-body {
  flex: 1;
  min-height: 0;
  display: flex;
}
.group-name {
  position: relative;
  flex: none;
  height: 16px;
  line-height: 17px;
  text-align: center;
  background: #c1d8f0;
  color: #3e6aaa;
}
.launcher {
  padding-right: 18px;
}
.launch {
  position: absolute;
  right: 4px;
  top: 4px;
}
.g-views { width: 50px; }
.g-clip { width: 151px; }
.g-font { width: 274px; }
.g-rich { width: 91px; }
.g-rec { width: 197px; }
.g-sort { width: 170px; }
.g-find { width: 116px; }
.big {
  display: flex;
  flex-direction: column;
  align-items: center;
  flex: none;
  width: 49px;
  height: 67px;
  padding: 6px 0 0;
  border: 0;
  background: none;
  color: #15428b;
}
.big span {
  margin-top: 2px;
  line-height: 15px;
}
.big .tri {
  margin-top: 4px;
}
.big .second {
  display: flex;
  align-items: center;
  gap: 3px;
  margin: 0;
  line-height: 12px;
}
.big .second .tri {
  margin: 0;
}
.off {
  color: #8d8d8d;
}
.g-views .big { width: 48px; }
.g-clip .big { width: 47px; }
.stack {
  display: grid;
  grid-auto-rows: 22px;
  align-content: start;
}
.cmd {
  display: flex;
  align-items: center;
  gap: 3px;
  padding: 1px 0 0;
  border: 0;
  background: none;
  color: #15428b;
  white-space: nowrap;
}
.cmd.off {
  color: #8d8d8d;
}
.cmd .tri {
  margin-left: 2px;
}
.rule {
  width: 1px;
  height: 56px;
  margin: 6px 7px 0 0;
  background: #8fafd8;
}
.two {
  grid-template-columns: 70px 66px;
}
.g-sort .rule {
  margin: 6px 0 0 5px;
}
.sorts {
  width: 23px;
  padding-left: 6px;
}
.sorts .cmd {
  gap: 2px;
  padding-top: 4px;
}
.pile {
  display: flex;
  flex-direction: column;
  width: 6px;
  font-family: "Liberation Serif", serif;
  font-size: 9px;
  line-height: 9px;
  color: #5e7093;
}
.g-sort .big {
  width: 49px;
}
.tools {
  flex-direction: column;
  gap: 7px;
  padding: 9px 0 0 3px;
}
.tool-row {
  display: flex;
  gap: 3px;
}
.pair {
  display: flex;
}
.fbox {
  position: relative;
  height: 22px;
}
.fbox select {
  display: block;
  width: 100%;
  height: 100%;
  appearance: none;
  border: 1px solid #b1bccb;
  border-radius: 0;
  background: #ededed;
  opacity: 1;
}
.fbox .tri {
  position: absolute;
  right: 4px;
  top: 9px;
}
.f-name { width: 139px; }
.f-size { width: 55px; }
.seg {
  display: flex;
  height: 22px;
  border: 1px solid #9ebae1;
  border-radius: 3px;
  background: linear-gradient(#d7e3f3, #c6d7ee);
}
.seg.dark {
  border-color: #7597c8;
}
.seg button {
  display: flex;
  align-items: center;
  justify-content: center;
  padding: 0;
  border: 0;
  background: none;
  color: #50607d;
}
.seg button + button {
  border-left: 1px solid #b3c9e8;
}
.seg .t23 { width: 22px; }
.seg .t32 { width: 31px; gap: 1px; }
.seg .t35 { width: 33px; gap: 3px; }
.hilite span {
  font-family: "Liberation Sans", sans-serif;
  font-size: 9px;
}
.seg .hilite {
  gap: 1px;
}
.letters,
.seg .letter-a {
  font-family: "Liberation Serif", serif;
  font-size: 14px;
}

/* work area */
.work {
  flex: 1;
  display: flex;
  padding: 3px 0 0 4px;
  background: #87a9d6;
}
.navpane {
  flex: none;
  display: flex;
  flex-direction: column;
  width: 25px;
  border: 1px solid #6f97cf;
  border-bottom: 0;
}
.expand {
  justify-content: center;
  height: 23px;
  background: linear-gradient(#dbe9fb, #c2dafa);
  border-bottom: 1px solid #6f97cf;
}
.nav-body {
  flex: 1;
  display: flex;
  align-items: center;
  justify-content: center;
  background: #c0daff;
}
.nav-body span {
  writing-mode: vertical-rl;
  transform: rotate(180deg);
  font-size: 12px;
  font-weight: 700;
  color: #1e4a8a;
  white-space: nowrap;
}
.doc {
  position: relative;
  flex: 1;
  min-width: 0;
  display: flex;
  flex-direction: column;
  margin-left: 3px;
  border-left: 2px solid #6f97cf;
}
.doctabs {
  display: flex;
  justify-content: space-between;
  align-items: center;
  height: 24px;
  padding-right: 8px;
}
.doctab {
  position: relative;
  display: flex;
  align-items: center;
  gap: 8px;
  width: 118px;
  height: 24px;
  padding: 0 0 1px 6px;
  border: 0;
  background: none;
  font-size: 11px;
  font-weight: 600;
  color: #000;
}
.doctab .shape {
  position: absolute;
  left: 0;
  top: 0;
  width: 118px;
  height: 24px;
}
.doctab .ico,
.doctab span {
  position: relative;
}
.banner {
  display: flex;
  height: 86px;
  padding-left: 14px;
  background: linear-gradient(90deg, #1f317c 410px, #48548e 560px, #48548e 660px, #1f317c 840px);
  font-family: "Liberation Sans", Arial, sans-serif;
  color: #fff;
}
.banner-text {
  width: 585px;
  height: 86px;
  padding-left: 6px;
  background: linear-gradient(90deg, #ffffff 200px, transparent) 0 43px / 100% 2px no-repeat;
}
.product {
  margin: 0;
  padding-top: 16px;
  font-size: 14px;
  line-height: 18px;
  font-weight: 700;
  white-space: nowrap;
}
h2 {
  margin: 17px 0 0;
  font-size: 24px;
  line-height: 30px;
  font-weight: 400;
}
.seal {
  margin: 0 0 0 45px;
}
.banner-btns {
  display: flex;
  gap: 10px;
  padding: 5px 0 0 217px;
}
.square {
  display: flex;
  align-items: center;
  justify-content: center;
  width: 34px;
  height: 34px;
  padding: 0;
  border: 1px solid #e6ecf2;
  border-radius: 1px;
  background: linear-gradient(#fff, #ecebe5);
}
.body {
  position: relative;
  flex: 1;
  padding-top: 8px;
  background: #fff;
}
.field-row {
  display: flex;
  align-items: center;
  margin-bottom: 10px;
  font-family: "Liberation Sans", Arial, sans-serif;
  font-size: 16px;
}
.field-row label {
  width: 274px;
  text-align: right;
  white-space: nowrap;
}
.field {
  width: 289px;
  height: 22px;
  margin-left: 5px;
  padding: 0 1px;
  border: 1px solid #a5a5a5;
  border-radius: 0;
  background: #fff;
  color: #000;
  appearance: none;
}
.combo {
  position: relative;
  display: flex;
}
.combo-arrow {
  position: absolute;
  right: 2px;
  top: 2px;
  display: flex;
  align-items: center;
  justify-content: center;
  width: 15px;
  height: 18px;
  border-radius: 2px;
  background: #bfd0f8;
  pointer-events: none;
}
.btn {
  display: block;
  height: 22px;
  padding: 0 2px 2px;
  border: 1px solid #003c74;
  border-radius: 3px;
  background: linear-gradient(#fefefe, #f3f3ef 60%, #ecebe5 88%, #d9d4c9);
  font-family: "Open Sans", "Noto Sans", sans-serif;
  font-size: 13px;
  line-height: 18px;
  color: #404040;
  text-align: center;
  white-space: nowrap;
}
.w96 {
  width: 96px;
  margin-left: 11px;
}
.second-btn {
  margin-left: 20px;
}
.help {
  align-self: flex-start;
  margin-left: 6px;
  padding-top: 2px;
}
.near {
  margin-left: 2px;
}
.w142 {
  width: 142px;
}
.focused {
  box-shadow: inset 0 0 0 2px #9fb8f3;
}
.flat {
  border-color: #dfe6ee;
  border-radius: 1px;
}
.workspace {
  display: flex;
  gap: 11px;
  padding-left: 7px;
}
.col {
  flex: none;
  width: 193px;
}
.col-head {
  display: flex;
  justify-content: space-between;
  height: 24px;
  padding: 2px 5px 0 2px;
  font-size: 14px;
  line-height: 20px;
}
.col-head button {
  height: 14px;
}
.list {
  display: block;
  width: 193px;
  height: 289px;
  padding: 0;
  border: 1px solid #a5a5a5;
  border-radius: 0;
  background: #fff;
  overflow: hidden;
  outline: none;
}
.list option {
  height: 19px;
  min-height: 19px;
  padding: 0 3px;
  font-size: 13px;
  line-height: 19px;
  color: #000;
}
.list option:checked {
  background: linear-gradient(#000, #000);
  -webkit-text-fill-color: #fff;
}
.col-actions {
  display: grid;
  gap: 10px;
  margin: 8px 2px 0 1px;
}
.groups {
  flex: none;
  width: 313px;
  margin-left: -1px;
  padding-top: 11px;
}
.box {
  min-height: 94px;
  margin: 0 0 3px;
  padding: 8px 9px;
  border: 1px solid #aca899;
}
.box:last-child {
  margin-top: 11px;
}
.box legend {
  display: flex;
  gap: 10px;
  height: 26px;
  padding: 8px 0 0 1px;
  font-size: 14px;
  line-height: 18px;
}
.box legend button {
  height: 14px;
  margin-top: -1px;
}
.box:last-child legend {
  gap: 5px;
}
.box-row {
  display: flex;
  gap: 10px;
}
.box-row + .box-row {
  margin-top: 10px;
}

/* dialog */
.dialog {
  position: absolute;
  left: 1367px;
  top: 90px;
  width: 480px;
  padding: 0 2px 2px;
  border: 1px solid #3a5a8c;
  border-radius: 5px 5px 0 0;
  background: #bcd3f1;
}
.dlg-title {
  display: flex;
  align-items: center;
  gap: 4px;
  height: 28px;
  margin: 0 -2px;
  padding: 0 11px 0 5px;
  border-radius: 4px 4px 0 0;
  background: linear-gradient(#d9e7f9 24%, #c6dbf5 26%, #e2eefc);
  color: #4a6ea9;
}
.dlg-title button {
  margin-left: auto;
}
.dlg-body {
  background: #fff;
}
h3 {
  margin: 0;
  padding: 0 28px 0 32px;
  background: #1f317c;
  color: #fff;
  font-family: "Liberation Sans", Arial, sans-serif;
  font-size: 24px;
  line-height: 28px;
  font-weight: 400;
  text-align: center;
}
.dlg-body p {
  margin: 0;
  padding: 1px 0 0 5px;
  line-height: 19px;
  text-align: center;
}
.choices {
  display: flex;
  gap: 94px;
  height: 76px;
  padding: 20px 0 0 95px;
  font-size: 17px;
  line-height: 24px;
}
.choice {
  display: flex;
  gap: 8px;
}
.choice input {
  appearance: none;
  width: 12px;
  height: 12px;
  margin: 3px 0 0;
  border: 1px solid #000;
  border-radius: 50%;
  background: #fff;
}
.choice input:checked {
  background: radial-gradient(circle, #000 2px, #fff 3px);
}
.choice span {
  width: 78px;
  height: 25px;
  padding-left: 1px;
  border: 1px solid transparent;
}
.choice .marked {
  border: 1px dotted #000;
}
.dlg-foot {
  display: flex;
  justify-content: space-between;
  height: 36px;
  padding: 5px 0 0 5px;
  background: #1f317c;
}
.dlg-foot .btn {
  width: 93px;
}
.scroll {
  display: flex;
  align-items: center;
  height: 17px;
  background: #f0f0f3;
}
.thumb {
  flex: 1;
  display: flex;
  align-items: center;
  justify-content: center;
  height: 15px;
  margin: 0 7px 0 1px;
  border: 1px solid #66809f;
  border-radius: 2px;
  background: linear-gradient(#e6eefa, #cfdff4 45%, #b2c9e6 50%, #c9dcf2);
}
.thumb i {
  width: 7px;
  height: 7px;
  background: repeating-linear-gradient(90deg, #6b7f9f 0 1px, transparent 1px 2px);
}

.footer {
  height: 32px;
  padding: 5px 0 0 5px;
  background: #1f317c;
}
.footer .btn {
  width: 188px;
}
.under {
  height: 17px;
  background: #f7f7f7;
}

/* status bar */
.status {
  display: flex;
  align-items: center;
  height: 22px;
  border-top: 1px solid #567db1;
  background: linear-gradient(#d7e6f9 30%, #b9d1f1 34%, #d9e8fa);
  font-size: 11px;
  color: #15428b;
}
.status-left,
.status-mid {
  display: flex;
  align-items: center;
  height: 100%;
  padding-bottom: 2px;
}
.status-left {
  width: 50%;
  padding-left: 8px;
  border-right: 1px solid #8fb0dd;
}
.status-mid {
  flex: 1;
  justify-content: flex-end;
  margin-right: 6px;
  padding-right: 9px;
  border-right: 1px solid #8fb0dd;
}
.formview {
  justify-content: center;
  width: 19px;
  height: 19px;
  border: 1px solid #b7925a;
  background: linear-gradient(#fbd79b, #f6b04d);
}

/* taskbar */
.taskbar {
  display: flex;
  height: 30px;
  background: linear-gradient(#2a62d4, #4590ee 8%, #2c68e2 18%, #245bdb 50%, #2760dd 85%, #1a43a4);
  font-family: "DejaVu Sans Condensed", "Noto Sans", sans-serif;
  font-size: 11px;
  color: #fff;
}
.start {
  display: flex;
  align-items: center;
  gap: 4px;
  width: 97px;
  height: 30px;
  padding: 0 0 0 9px;
  border: 0;
  border-radius: 0 10px 12px 0;
  background: linear-gradient(#5fae5c, #3c8f3b 20%, #378e36 70%, #2c742c);
  color: #fff;
  font-family: "Liberation Sans", Arial, sans-serif;
  font-size: 18px;
  font-style: italic;
  font-weight: 700;
  text-shadow: 1px 1px 1px #1d4a1c;
}
.quick {
  display: flex;
  gap: 7px;
  width: 84px;
  padding-left: 12px;
}
.tasks {
  flex: 1;
  display: flex;
  gap: 2px;
  padding-top: 3px;
}
.task {
  display: flex;
  align-items: center;
  gap: 4px;
  flex: 0 1 158px;
  min-width: 0;
  height: 25px;
  padding: 0 9px;
  border: 0;
  border-radius: 2px;
  background: linear-gradient(#5a9bf8, #3c81f3 15%, #3a7cf0 80%, #2f68d8);
  color: #fff;
  white-space: nowrap;
}
.task.active {
  background: linear-gradient(#15389a, #1b4cb6 20%, #1e50bd);
}
.lang {
  display: flex;
  align-items: center;
  gap: 12px;
  padding-right: 16px;
}
.tray {
  display: flex;
  align-items: center;
  gap: 2px;
  width: 147px;
  border-left: 1px solid #1a3d9c;
  background: linear-gradient(#18b9f5, #1290e8 20%, #0f8de9 80%, #0b6fc4);
}
.chevron {
  margin-left: -9px;
}
.tray span {
  margin-left: 6px;
}
</style>
